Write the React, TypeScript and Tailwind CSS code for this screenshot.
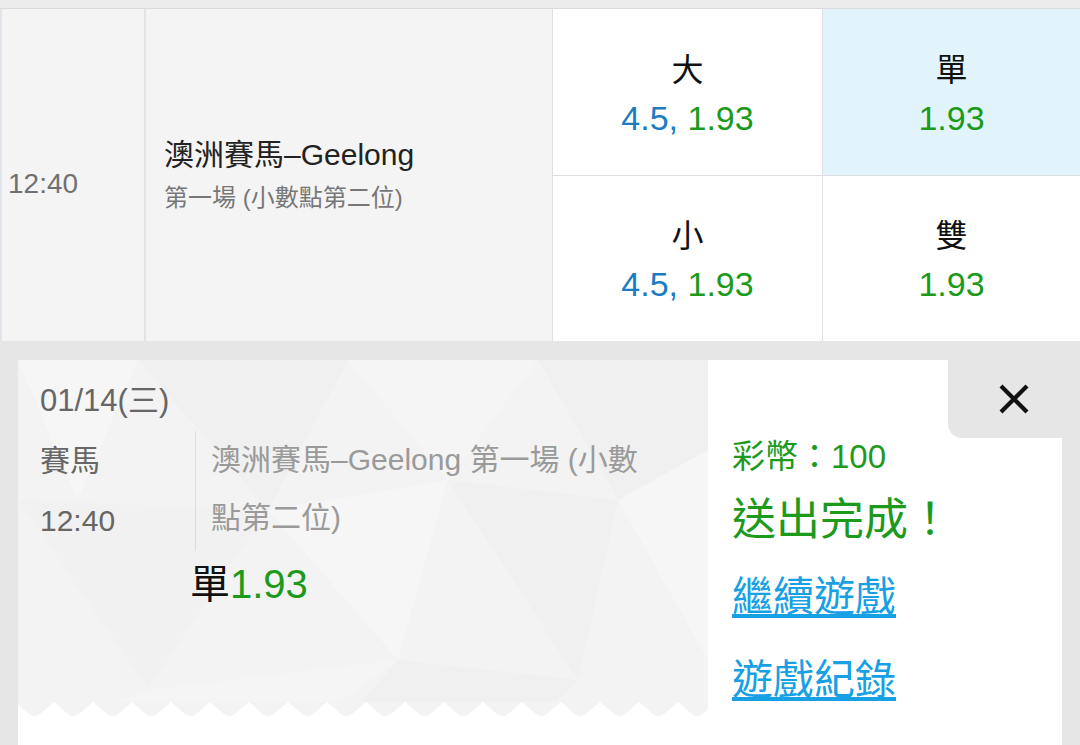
import React from "react";

const FONT = {
  fontFamily: '"Liberation Sans", "Noto Sans CJK TC", sans-serif',
};

function OddsCell({
  label,
  line,
  odds,
  highlight,
  bottom,
}: {
  label: string;
  line?: string;
  odds: string;
  highlight?: boolean;
  bottom?: boolean;
}) {
  return (
    <div
      className={`flex flex-1 flex-col items-center justify-center pt-[4px] ${
        highlight ? "bg-[#e1f4fb]" : "bg-white"
      } ${bottom ? "" : "border-b border-[#dedede]"}`}
    >
      <div className="text-[32px] leading-[48px] text-[#111]">{label}</div>
      <div className="text-[34px] leading-[48px]">
        {line && <span className="text-[#1b7cc2]">{line} </span>}
        <span className="text-[#1c9a1c]">{odds}</span>
      </div>
    </div>
  );
}

function TicketPattern() {
  // faint low-poly background drawn behind the ticket
  return (
    <svg
      className="absolute inset-0"
      width="690"
      height="358"
      viewBox="0 0 690 358"
    >
      <polygon points="0,0 120,0 60,140" fill="#ffffff" opacity="0.25" />
      <polygon points="120,0 330,0 250,150" fill="#ececec" opacity="0.35" />
      <polygon points="330,0 520,0 430,120" fill="#ffffff" opacity="0.22" />
      <polygon points="520,0 690,0 690,90 600,140" fill="#ececec" opacity="0.3" />
      <polygon points="0,140 250,150 130,330" fill="#eeeeee" opacity="0.3" />
      <polygon points="250,150 430,120 380,300" fill="#ffffff" opacity="0.25" />
      <polygon points="430,120 600,140 560,320" fill="#ececec" opacity="0.3" />
      <polygon points="600,140 690,90 690,300" fill="#ffffff" opacity="0.25" />
      <polygon points="130,330 380,300 300,358 60,358" fill="#ffffff" opacity="0.22" />
      <polygon points="380,300 560,320 520,358 330,358" fill="#ececec" opacity="0.3" />
    </svg>
  );
}

function Zigzag() {
  // white teeth pointing up under rounded gray scallops
  const period = 39;
  let d = "M0,0";
  for (let p = -3; p < 690; p += period) {
    d += ` L${p},0 C${p + 10},8 ${p + 14},14 ${p + 19.5},14 C${p + 25},14 ${
      p + 29
    },8 ${p + period},0`;
  }
  d += " L690,0 Z";
  return (
    <svg
      className="absolute bottom-0 left-0"
      width="690"
      height="16"
      viewBox="0 0 690 16"
    >
      <rect x="0" y="0" width="690" height="16" fill="#ffffff" />
      <path d={d} fill="#f3f3f3" />
    </svg>
  );
}

export default function App() {
  return (
    <div
      className="flex h-[745px] w-[1080px] flex-col overflow-hidden bg-[#e6e6e6]"
      style={FONT}
    >
      <div className="h-[9px] border-b border-[#dadada] bg-[#ececec]" />

      {/* match row */}
      <div className="flex h-[332px] border-l-2 border-[#dfe5ea]">
        <div className="flex w-[144px] items-center border-r-2 border-[#e3e3e3] bg-[#f4f4f4] pl-[6px] pt-[18px]">
          <span className="text-[28px] text-[#707070]">12:40</span>
        </div>
        <div className="flex w-[407px] flex-col justify-center border-r border-[#e0e0e0] bg-[#f4f4f4] pl-[18px]">
          <div className="text-[30px] leading-[40px] text-[#222]">
            澳洲賽馬–Geelong
          </div>
          <div className="mt-[5px] text-[24px] leading-[36px] text-[#777]">
            第一場 (小數點第二位)
          </div>
        </div>
        <div className="flex w-[270px] flex-col border-r border-[#e0e0e0]">
          <OddsCell label="大" line="4.5," odds="1.93" />
          <OddsCell label="小" line="4.5," odds="1.93" bottom />
        </div>
        <div className="flex flex-1 flex-col">
          <OddsCell label="單" odds="1.93" highlight />
          <OddsCell label="雙" odds="1.93" bottom />
        </div>
      </div>

      {/* bet confirmation panel */}
      <div className="flex flex-1 px-[18px] pt-[19px]">
        <div className="relative flex flex-1 bg-white">
          <div className="relative h-[358px] w-[690px] bg-[#f3f3f3]">
            <TicketPattern />
            <Zigzag />
            <div className="relative pl-[22px] pt-[21px]">
              <div className="text-[31px] leading-[40px] text-[#666]">
                01/14(三)
              </div>
              <div className="mt-[10px] flex">
                <div className="w-[155px] text-[30px] leading-[60px] text-[#666]">
                  <div>賽馬</div>
                  <div>12:40</div>
                </div>
                <div className="w-[460px] border-l border-[#dcdcdc] pl-[15px] text-[30px] leading-[58px] text-[#9a9a9a]">
                  澳洲賽馬–Geelong 第一場 (小數點第二位)
                </div>
              </div>
              <div className="mt-[8px] pl-[150px] text-[40px] leading-[50px]">
                <span className="text-[#111]">單</span>
                <span className="text-[#1c9a1c]">1.93</span>
              </div>
            </div>
          </div>

          <div className="flex flex-1 flex-col pl-[24px] pt-[77px]">
            <div className="text-[33px] leading-[40px] text-[#1c9a1c]">
              彩幣：100
            </div>
            <div className="mt-[15px] text-[44px] leading-[56px] text-[#1c9a1c]">
              送出完成！
            </div>
            <a className="mt-[24px] w-fit text-[41px] leading-[50px] text-[#17a0e3] underline underline-offset-[3px]">
              繼續遊戲
            </a>
            <a className="mt-[33px] w-fit text-[41px] leading-[50px] text-[#17a0e3] underline underline-offset-[3px]">
              遊戲紀錄
            </a>
          </div>

          {/* close tab */}
          <div className="absolute right-[-18px] top-0 flex h-[78px] w-[132px] items-center justify-center rounded-bl-[14px] bg-[#e6e6e6]">
            <svg width="30" height="30" viewBox="0 0 30 30">
              <path
                d="M2 2 L28 28 M28 2 L2 28"
                stroke="#111"
                strokeWidth="4.2"
                fill="none"
              />
            </svg>
          </div>
        </div>
      </div>
    </div>
  );
}
